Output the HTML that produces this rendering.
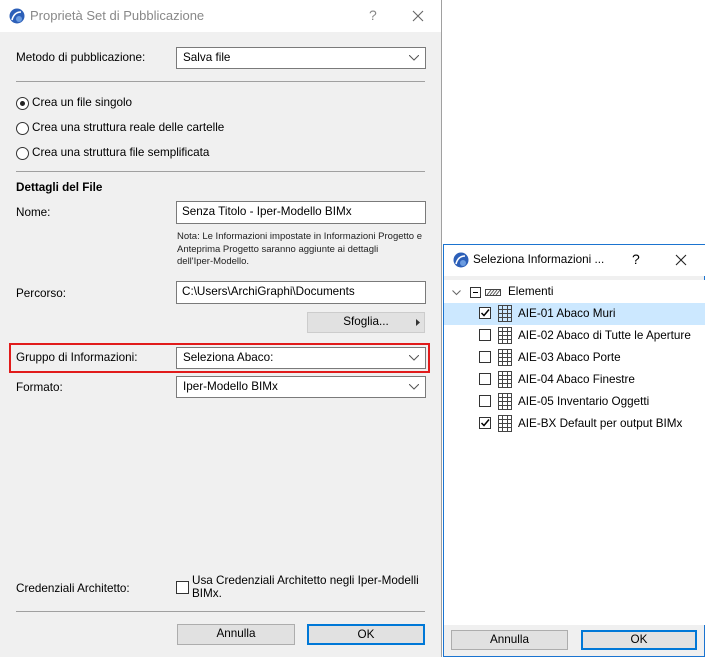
<!DOCTYPE html>
<html><head><meta charset="utf-8"><style>
*{margin:0;padding:0;box-sizing:border-box}
body{width:705px;height:657px;background:#fff;position:relative;overflow:hidden;font-family:"Liberation Sans",sans-serif;font-size:11.7px;color:#000}
.a{position:absolute;white-space:nowrap}
.dlg{position:absolute;background:#f0f0f0}
.field{position:absolute;background:#fff;border:1px solid #7a7a7a;padding-left:5px;line-height:20px}
.combo{position:absolute;background:#fff;border:1px solid #7a7a7a;padding-left:6px;line-height:20px}
.combo svg{position:absolute;right:6px;top:7px}
.sep{position:absolute;height:1px;background:#a0a0a0}
.btn{position:absolute;background:#e1e1e1;border:1px solid #adadad;text-align:center;line-height:18px}
.radio{position:absolute;width:13px;height:13px;border:1px solid #333;border-radius:50%;background:#fff}
.cb{position:absolute;width:12px;height:12px;border:1px solid #333;background:#fff}
</style></head><body>
<div class="dlg" style="left:0;top:0;width:442px;height:657px;border-right:1px solid #a0a0a0"></div>
<div class="a" style="left:0;top:0;width:441px;height:32px;background:#fff"></div>
<svg class="a" style="left:9px;top:8px" width="16" height="16"><circle cx="8" cy="8" r="7.5" fill="#2c5fb8"/><path d="M3 12 Q5 4 12 4" stroke="#fff" stroke-width="1.6" fill="none"/><circle cx="10" cy="11" r="3" fill="#6a9be0"/></svg>
<div class="a" style="left:30px;top:8px;font-size:13px;color:#888">Proprietà Set di Pubblicazione</div>
<div class="a" style="left:369px;top:7px;font-size:14px;color:#888">?</div>
<svg class="a" style="left:412px;top:10px" width="12" height="12"><path d="M1 1L11 11M11 1L1 11" stroke="#666" stroke-width="1.1"/></svg>

<div class="a" style="left:16px;top:51px">Metodo di pubblicazione:</div>
<div class="combo" style="left:176px;top:47px;width:250px;height:22px">Salva file<svg width="10" height="6"><path d="M0 0L5 5L10 0" stroke="#555" fill="none"/></svg></div>
<div class="sep" style="left:16px;top:81px;width:409px"></div>

<div class="radio" style="left:16px;top:97px"><div style="position:absolute;left:3px;top:3px;width:5px;height:5px;border-radius:50%;background:#222"></div></div>
<div class="a" style="left:32px;top:96px">Crea un file singolo</div>
<div class="radio" style="left:16px;top:122px"></div>
<div class="a" style="left:32px;top:121px">Crea una struttura reale delle cartelle</div>
<div class="radio" style="left:16px;top:147px"></div>
<div class="a" style="left:32px;top:146px">Crea una struttura file semplificata</div>
<div class="sep" style="left:16px;top:171px;width:409px"></div>

<div class="a" style="left:16px;top:181px;font-weight:bold">Dettagli del File</div>
<div class="a" style="left:16px;top:206px">Nome:</div>
<div class="field" style="left:176px;top:201px;width:250px;height:23px">Senza Titolo - Iper-Modello BIMx</div>
<div class="a" style="left:177px;top:231px;font-size:9.5px;line-height:12.5px;color:#222">Nota: Le Informazioni impostate in Informazioni Progetto e<br>Anteprima Progetto saranno aggiunte ai dettagli<br>dell'Iper-Modello.</div>
<div class="a" style="left:16px;top:287px">Percorso:</div>
<div class="field" style="left:176px;top:281px;width:250px;height:23px">C:\Users\ArchiGraphi\Documents</div>
<div class="btn" style="left:307px;top:312px;width:118px;height:21px;border:1px solid #ccc">Sfoglia...<svg style="position:absolute;right:4px;top:6px" width="4" height="7"><path d="M0 0L4 3.5L0 7Z" fill="#333"/></svg></div>

<div class="a" style="left:9px;top:343px;width:421px;height:30px;border:2px solid #e11b1b"></div>
<div class="a" style="left:16px;top:351px">Gruppo di Informazioni:</div>
<div class="combo" style="left:176px;top:347px;width:250px;height:22px">Seleziona Abaco:<svg width="10" height="6"><path d="M0 0L5 5L10 0" stroke="#555" fill="none"/></svg></div>
<div class="a" style="left:16px;top:381px">Formato:</div>
<div class="combo" style="left:176px;top:376px;width:250px;height:22px">Iper-Modello BIMx<svg width="10" height="6"><path d="M0 0L5 5L10 0" stroke="#555" fill="none"/></svg></div>

<div class="a" style="left:16px;top:582px">Credenziali Architetto:</div>
<div class="cb" style="left:176px;top:581px;width:13px;height:13px"></div>
<div class="a" style="left:192px;top:574px;line-height:13px">Usa Credenziali Architetto negli Iper-Modelli<br>BIMx.</div>
<div class="sep" style="left:16px;top:611px;width:409px"></div>
<div class="btn" style="left:177px;top:624px;width:118px;height:21px;border:1px solid #adadad">Annulla</div>
<div class="btn" style="left:307px;top:624px;width:118px;height:21px;border:2px solid #0078d7;line-height:17px">OK</div>

<div class="a" style="left:443px;top:244px;width:262px;height:413px;background:#f0f0f0;border:1px solid #1b74d0"></div>
<div class="a" style="left:444px;top:245px;width:261px;height:31px;background:#fff"></div>
<svg class="a" style="left:453px;top:252px" width="16" height="16"><circle cx="8" cy="8" r="7.5" fill="#2c5fb8"/><path d="M3 12 Q5 4 12 4" stroke="#fff" stroke-width="1.6" fill="none"/><circle cx="10" cy="11" r="3" fill="#6a9be0"/></svg>
<div class="a" style="left:473px;top:253px">Seleziona Informazioni ...</div>
<div class="a" style="left:632px;top:251px;font-size:14px">?</div>
<svg class="a" style="left:675px;top:254px" width="12" height="12"><path d="M1 1L11 11M11 1L1 11" stroke="#222" stroke-width="1.1"/></svg>
<div class="a" style="left:444px;top:280px;width:261px;height:345px;background:#fff"></div>
<svg class="a" style="left:452px;top:290px" width="9" height="6"><path d="M0.5 0.5L4.5 4.5L8.5 0.5" stroke="#666" fill="none"/></svg>
<div class="cb" style="left:470px;top:287px;width:11px;height:11px"><div style="position:absolute;left:2px;top:4px;width:5px;height:1px;background:#000"></div></div>
<svg class="a" style="left:485px;top:289px" width="16" height="7"><rect x="0.5" y="0.5" width="15" height="6" fill="#fff" stroke="#444"/><path d="M2 6L6 1M5 6L9 1M8 6L12 1M11 6L15 1" stroke="#555"/></svg>
<div class="a" style="left:508px;top:285px">Elementi</div>
<div class="a" style="left:444px;top:303px;width:261px;height:22px;background:#cce8ff"></div>

<div class="btn" style="left:451px;top:630px;width:117px;height:20px;border:1px solid #adadad">Annulla</div>
<div class="btn" style="left:581px;top:630px;width:116px;height:20px;border:2px solid #0078d7;line-height:16px">OK</div>
<div class="cb" style="left:479px;top:307px"><svg width="10" height="10" style="position:absolute;left:0;top:0"><path d="M1.5 5L4 7.5L9 1.5" stroke="#000" stroke-width="1.5" fill="none"/></svg></div>
<div class="cb" style="left:479px;top:329px"></div>
<div class="cb" style="left:479px;top:351px"></div>
<div class="cb" style="left:479px;top:373px"></div>
<div class="cb" style="left:479px;top:395px"></div>
<div class="cb" style="left:479px;top:417px"><svg width="10" height="10" style="position:absolute;left:0;top:0"><path d="M1.5 5L4 7.5L9 1.5" stroke="#000" stroke-width="1.5" fill="none"/></svg></div>
<svg class="a" style="left:498px;top:305px" width="14" height="130">
<g fill="none" stroke="#444"><g id="g"><rect x="0.5" y="0.5" width="13" height="16"/><path d="M4.5 0.5V16.5M9.5 0.5V16.5M0.5 4.5H13.5M0.5 8.5H13.5M0.5 12.5H13.5"/></g>
<use href="#g" y="22"/><use href="#g" y="44"/><use href="#g" y="66"/><use href="#g" y="88"/><use href="#g" y="110"/></g></svg>
<div class="a" style="left:518px;top:307px">AIE-01 Abaco Muri</div>
<div class="a" style="left:518px;top:329px">AIE-02 Abaco di Tutte le Aperture</div>
<div class="a" style="left:518px;top:351px">AIE-03 Abaco Porte</div>
<div class="a" style="left:518px;top:373px">AIE-04 Abaco Finestre</div>
<div class="a" style="left:518px;top:395px">AIE-05 Inventario Oggetti</div>
<div class="a" style="left:518px;top:417px">AIE-BX Default per output BIMx</div>
</body></html>
